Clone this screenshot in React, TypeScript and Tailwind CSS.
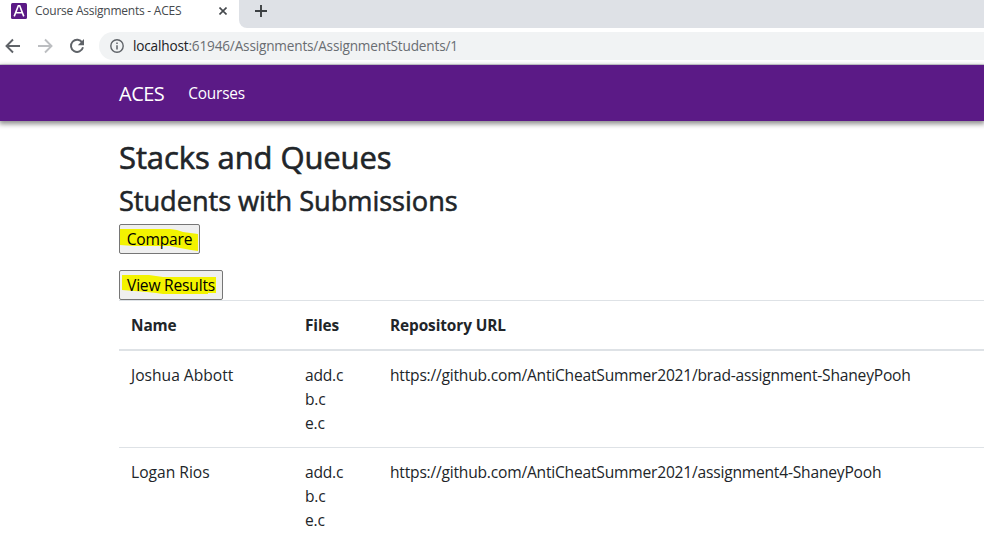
const students = [
  {
    name: "Joshua Abbott",
    files: ["add.c", "b.c", "e.c"],
    url: "https://github.com/AntiCheatSummer2021/brad-assignment-ShaneyPooh",
  },
  {
    name: "Logan Rios",
    files: ["add.c", "b.c", "e.c"],
    url: "https://github.com/AntiCheatSummer2021/assignment4-ShaneyPooh",
  },
];

function TabStrip() {
  return (
    <div className="flex h-7 bg-white">
      <div className="flex h-[22px] w-[239px] items-center">
        <svg className="ml-[11px] shrink-0" width="16" height="16" viewBox="0 0 16 16">
          <rect width="16" height="16" rx="1.5" fill="#5b1a86" />
          <path d="M3.2 13.4 7.3 2.8h1.4l4.1 10.6M4.9 9.7h6.2" fill="none" stroke="#fff" strokeWidth="1.6" />
        </svg>
        <span className="ml-2 flex-1 whitespace-nowrap text-[12px] leading-4 tracking-[-0.24px] text-[#45494d]">
          Course Assignments - ACES
        </span>
        <svg className="mr-[12px] shrink-0" width="8" height="8" viewBox="0 0 8 8">
          <path d="M.5.5l7 7M7.5.5l-7 7" stroke="#45494d" strokeWidth="1.6" />
        </svg>
      </div>
      <div className="flex-1 rounded-bl-lg bg-[#dee1e6] pl-4 pt-[5px]">
        <svg width="12" height="12" viewBox="0 0 12 12">
          <path d="M6 0v12M0 6h12" stroke="#3c4043" strokeWidth="1.9" />
        </svg>
      </div>
    </div>
  );
}

function Toolbar() {
  return (
    <div className="flex h-[37px] items-center border-b border-[#d5d7da] bg-white">
      <svg className="ml-[5px] shrink-0" width="16" height="16" viewBox="0 0 16 16">
        <path d="M15 8H2M8 1.5 1.5 8 8 14.5" fill="none" stroke="#5f6368" strokeWidth="1.9" />
      </svg>
      <svg className="ml-[16px] shrink-0" width="16" height="16" viewBox="0 0 16 16">
        <path d="M1 8h13M8 1.5 14.5 8 8 14.5" fill="none" stroke="#bcbec1" strokeWidth="1.9" />
      </svg>
      <svg className="ml-[16px] shrink-0" width="16" height="16" viewBox="0 0 16 16">
        <path d="M13.3 4.7A6.1 6.1 0 1 0 14 9.3" fill="none" stroke="#5f6368" strokeWidth="1.9" />
        <path d="M15 1v6.2H8.8z" fill="#5f6368" />
      </svg>
      <div className="ml-[14px] flex h-7 flex-1 items-center rounded-l-full bg-[#f1f3f4]">
        <svg className="ml-[11px] shrink-0" width="14" height="14" viewBox="0 0 14 14">
          <circle cx="7" cy="7" r="6.2" fill="none" stroke="#5f6368" strokeWidth="1.4" />
          <path d="M7 6.2v4.2M7 3.5v1.5" stroke="#5f6368" strokeWidth="1.5" />
        </svg>
        <span className="ml-[9px] whitespace-nowrap text-[13.6px] leading-5 tracking-[-0.17px] text-[#696d72]">
          <span className="text-[#202124]">localhost</span>:61946/Assignments/AssignmentStudents/1
        </span>
      </div>
    </div>
  );
}

export default function App() {
  return (
    <div className="h-[534px] w-[984px] overflow-hidden bg-white font-['Open_Sans','Noto_Sans',sans-serif] text-[15.6px] leading-6 tracking-[-0.21px] text-[#212529]">
      <TabStrip />
      <Toolbar />
      <nav className="flex h-14 items-center bg-[#5b1a86] pl-[119px] text-white shadow-[0_2px_5px_1px_rgba(0,0,0,0.45)]">
        <span className="pt-px text-[20px] leading-[30px] tracking-[-0.5px]">ACES</span>
        <span className="ml-[24px] pt-[2px] text-[15.4px]">Courses</span>
      </nav>
      <main className="pl-[119px] pt-[15px]">
        <h1 className="mb-2 h-[38px] text-[31px] leading-[42px] tracking-[-0.1px] [-webkit-text-stroke:0.6px_#212529]">
          Stacks and Queues
        </h1>
        <h2 className="mb-2 h-[34px] text-[27.2px] leading-[38px] tracking-[-0.05px] [-webkit-text-stroke:0.55px_#212529]">
          Students with Submissions
        </h2>
        <button className="relative mb-4 block h-[30px] w-[81px] rounded-[2px] border border-[#767676] bg-[#efefef] text-black">
          <svg className="absolute left-0 top-0" width="79" height="28" viewBox="0 0 79 28">
            <path d="M0 4H50L57 5L63 7L78 9V26L71 25L60 23L50 21L14 21L0 20Z" fill="#f3f300" />
          </svg>
          <span className="relative">Compare</span>
        </button>
        <button className="relative block h-[30px] w-[104px] rounded-[2px] border border-[#767676] bg-[#efefef] text-black">
          <svg className="absolute left-0 top-0" width="102" height="28" viewBox="0 0 102 28">
            <path d="M2 4H29L36 5L43 6H96V22H88V23H43L36 22L27 21L2 19Z" fill="#f3f300" />
          </svg>
          <span className="relative">View Results</span>
        </button>
        <table className="w-[900px] table-fixed border-separate border-spacing-0 text-left">
          <colgroup>
            <col className="w-[174px]" />
            <col className="w-[85px]" />
            <col />
          </colgroup>
          <thead>
            <tr className="text-[15.4px]">
              {["Name", "Files", "Repository URL"].map((title) => (
                <th key={title} className="h-[51px] border-b-2 border-t border-[#dee2e6] px-3 pb-0 pt-[2px] font-bold tracking-[-0.1px]">
                  {title}
                </th>
              ))}
            </tr>
          </thead>
          <tbody>
            {students.map((student) => (
              <tr key={student.name} className="align-top">
                <td className="border-b border-[#dee2e6] p-3 tracking-[0px]">{student.name}</td>
                <td className="border-b border-[#dee2e6] p-3">
                  {student.files.map((file) => (
                    <div key={file}>{file}</div>
                  ))}
                </td>
                <td className="whitespace-nowrap border-b border-[#dee2e6] p-3">{student.url}</td>
              </tr>
            ))}
          </tbody>
        </table>
      </main>
    </div>
  );
}
